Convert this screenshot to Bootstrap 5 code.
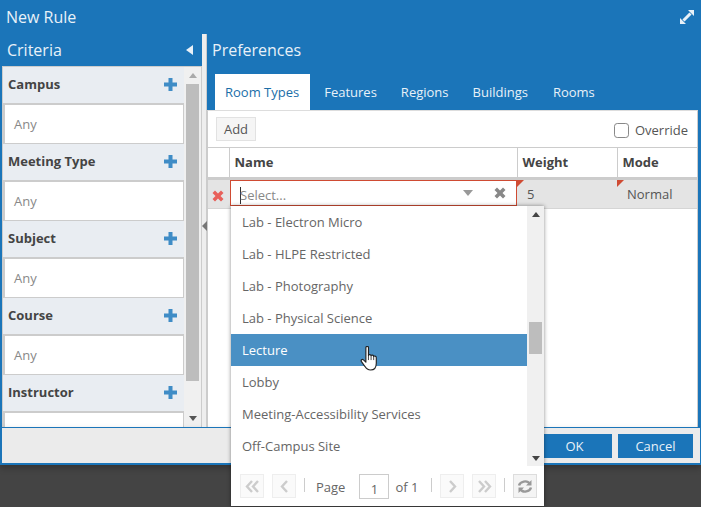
<!DOCTYPE html>
<html lang="en">
<head>
  <meta charset="UTF-8">
  <meta name="viewport" content="width=device-width, initial-scale=1.0">
  <title>New Rule</title>
  <link rel="stylesheet" href="https://cdn.jsdelivr.net/npm/bootstrap@5.3.0/dist/css/bootstrap.min.css">
  <style>
    html, body { margin: 0; height: 100%; overflow: hidden; background: #444; }
    body { font-family: "Open Sans", "Liberation Sans", sans-serif; font-size: 13px; color: #555; }
    .stage { position: relative; width: 701px; height: 507px; background: #444; overflow: hidden; }
    .dlg { width: 701px; height: 465px; background: #1b75b9; }
    .dlg-title { height: 34px; padding: 0 6px; color: #e8f1f8; font-size: 16px; line-height: 35px; }
    .dlg-body { height: 393px; padding-left: 2px; padding-right: 3px; }
    .left-pane { width: 200px; flex: none; }
    .pane-title { height: 32px; padding: 0 9px 0 5px; color: #e8f1f8; font-size: 16px; line-height: 33px; }
    .crit-box { height: 361px; background: #f0f0f0; border: 1px solid #ccc; border-bottom: 0; overflow: hidden; }
    .crit-list { width: 181px; flex: none; }
    .crit-head { height: 36px; padding: 0 7px 0 5px; background: #e9edf2; color: #444; font-weight: 700; font-size: 13px; }
    .crit-head svg { margin-top: -2px; }
    .crit-any { height: 41px; background: #fff; border: 1px solid #ccc; border-width: 2px 1px 1px 1px; border-left-width: 2px; padding-left: 9px; line-height: 39px; color: #888; }
    .fake-scroll { width: 17px; flex: none; }
    .fake-scroll .arrow { height: 17px; }
    .fake-scroll .thumb { width: 13px; margin: 0 auto; background: #bdbdbd; }
    .split { width: 5px; flex: none; margin-top: 0; background: #eee; border-right: 1px solid #ccc; position: relative; }
    .split svg { position: absolute; left: 0; top: 187px; }
    .right-pane { flex: 1; min-width: 0; }
    .pref-tabs { height: 36px; padding-left: 8px; margin-top: 8px; }
    .pref-tab { padding: 0 11px; margin-right: 2px; color: #e8f1f8; line-height: 37px; font-size: 13px; text-decoration: none; }
    .pref-tab.on { background: #fff; color: #1b6ea8; margin-right: 3px; padding: 0 11px 0 10px; }
    .pref-tab.wide { margin-right: 3px; }
    .pref-box { height: 317px; background: #fff; border: 1px solid #ccc; border-bottom: 0; border-top-color: #ddd; }
    .pref-bar { height: 37px; padding: 6px 9px 0 8px; border-bottom: 1px solid #ccc; }
    .add-btn { height: 24px; width: 40px; padding: 0; font-size: 13px; line-height: 22px; border-radius: 0; color: #555; background: #f5f5f5; border: 1px solid #e2e2e2; }
    .over-check { width: 15px; height: 15px; margin: 0 6px 0 0; border: 1px solid #888; border-radius: 3px; }
    .rule-tbl { table-layout: fixed; width: 489px; margin: 0; border-collapse: collapse; font-size: 13px; }
    .rule-tbl th { height: 30px; padding: 0 5px; font-weight: 700; color: #444; border-right: 1px solid #ccc; border-bottom: 3px solid #ccc; background: #fff; vertical-align: middle; }
    .rule-tbl td { height: 29px; padding: 2px 10px 0; background: #e4e4e4; color: #555; border-bottom: 1px solid #d5d5d5; position: relative; vertical-align: middle; }
    .rule-tbl td.cell-x { padding: 3px 0 0 4px; }
    .rule-tbl td.cell-in { padding: 0 0 2px 1px; }
    .red-tip { position: absolute; left: 0; top: 0; width: 0; height: 0; border-top: 7px solid #cf4b33; border-right: 7px solid transparent; }
    .sel-input { height: 26px; background: #fff; border: 1px solid #cf4b33; padding: 0 10px 0 9px; color: #888; }
    .sel-input .caret-bar { width: 1px; height: 17px; background: #333; margin-top: 5px; margin-right: -1px; flex: none; }
    .sel-input .sel-txt { padding-top: 6px; }
    .sel-input .sel-clear { margin-left: 21px; }
    .dlg-foot { height: 38px; background: #ebebeb; border: 2px solid #1b75b9; border-top-width: 1px; border-right-width: 1px; padding: 6px 7px 0 0; box-shadow: 0 3px 6px rgba(0,0,0,.25); gap: 6px; }
    .foot-btn { width: 75px; height: 24px; padding: 0; border-radius: 0; background: #1b75b9; color: #e8f1f8; border: 0; font-size: 13px; line-height: 24px; }
    .drop { position: absolute; left: 231px; top: 206px; width: 313px; height: 300px; background: #fff; box-shadow: 0 0 4px rgba(0,0,0,.45); }
    .drop-list { height: 260px; overflow: hidden; }
    .drop-items { width: 296px; flex: none; }
    .drop-row { height: 32px; padding: 0 11px; line-height: 33px; color: #666; font-size: 13px; border: 0; border-radius: 0; background: #fff; }
    .drop-row.hot { background: #4a90c4; color: #fff; }
    .drop-scroll { width: 17px; background: #f0f0f0; }
    .drop-pager { height: 40px; padding: 8px 0 0 9px; color: #666; font-size: 13px; white-space: nowrap; }
    .pg-btn { width: 24px; height: 24px; flex: none; background: #fafafa; border: 1px solid #eee; margin-right: 8px; }
    .pg-sep { width: 1px; height: 14px; flex: none; background: #ccc; margin: 4px 12px 0 0; }
    .pg-sep.tight { margin-right: 8px; }
    .pg-txt { margin-top: 4px; }
    .pg-num { width: 30px; height: 25px; flex: none; border: 1px solid #ccc; text-align: center; line-height: 28px; margin: 0 6px 0 14px; color: #666; }
    .pg-end { margin-right: 13px; }
    .hand { position: absolute; left: 360px; top: 346px; }
  </style>
</head>
<body>
  <div class="stage">
    <div class="dlg d-flex flex-column">
      <div class="dlg-title d-flex justify-content-between align-items-center">
        <span>New Rule</span>
        <svg width="16" height="16" viewBox="0 0 16 16" fill="#e8f1f8"><path d="M9 1H15V7ZM1 9V15H7Z"/><path d="M4.500 11.500 11.500 4.500" stroke="#e8f1f8" stroke-width="3"/></svg>
      </div>
      <div class="dlg-body d-flex">
        <div class="left-pane d-flex flex-column">
          <div class="pane-title d-flex justify-content-between align-items-center">
            <span>Criteria</span>
            <svg width="7" height="10" viewBox="0 0 7 10" fill="#e8f1f8"><path d="M7 0V10L0 5Z"/></svg>
          </div>
          <div class="crit-box d-flex">
            <div class="crit-list">
              <div class="crit-head d-flex justify-content-between align-items-center"><span>Campus</span><svg width="13" height="13" viewBox="0 0 13 13" fill="#3f8cc6"><path d="M4.500 0H8.500V4.500H13V8.500H8.500V13H4.500V8.500H0V4.500H4.500Z"/></svg></div>
              <div class="crit-any">Any</div>
              <div class="crit-head d-flex justify-content-between align-items-center"><span>Meeting Type</span><svg width="13" height="13" viewBox="0 0 13 13" fill="#3f8cc6"><path d="M4.500 0H8.500V4.500H13V8.500H8.500V13H4.500V8.500H0V4.500H4.500Z"/></svg></div>
              <div class="crit-any">Any</div>
              <div class="crit-head d-flex justify-content-between align-items-center"><span>Subject</span><svg width="13" height="13" viewBox="0 0 13 13" fill="#3f8cc6"><path d="M4.500 0H8.500V4.500H13V8.500H8.500V13H4.500V8.500H0V4.500H4.500Z"/></svg></div>
              <div class="crit-any">Any</div>
              <div class="crit-head d-flex justify-content-between align-items-center"><span>Course</span><svg width="13" height="13" viewBox="0 0 13 13" fill="#3f8cc6"><path d="M4.500 0H8.500V4.500H13V8.500H8.500V13H4.500V8.500H0V4.500H4.500Z"/></svg></div>
              <div class="crit-any">Any</div>
              <div class="crit-head d-flex justify-content-between align-items-center"><span>Instructor</span><svg width="13" height="13" viewBox="0 0 13 13" fill="#3f8cc6"><path d="M4.500 0H8.500V4.500H13V8.500H8.500V13H4.500V8.500H0V4.500H4.500Z"/></svg></div>
              <div class="crit-any"></div>
            </div>
            <div class="fake-scroll d-flex flex-column">
              <div class="arrow d-flex align-items-center justify-content-center"><svg width="8" height="5" viewBox="0 0 8 5" fill="#aaa"><path d="M4 0 8 5H0Z"/></svg></div>
              <div class="thumb" style="height:297px"></div>
              <div class="arrow mt-auto d-flex align-items-center justify-content-center"><svg width="8" height="5" viewBox="0 0 8 5" fill="#555"><path d="M0 0H8L4 5Z"/></svg></div>
            </div>
          </div>
        </div>
        <div class="split">
          <svg width="5" height="10" viewBox="0 0 5 10" fill="#777"><path d="M5 0V10L0 5Z"/></svg>
        </div>
        <div class="right-pane d-flex flex-column">
          <div class="pane-title">Preferences</div>
          <nav class="pref-tabs d-flex">
            <a class="pref-tab on" href="#">Room Types</a>
            <a class="pref-tab" href="#">Features</a>
            <a class="pref-tab" href="#">Regions</a>
            <a class="pref-tab wide" href="#">Buildings</a>
            <a class="pref-tab" href="#">Rooms</a>
          </nav>
          <div class="pref-box">
            <div class="pref-bar d-flex justify-content-between align-items-start">
              <button class="btn add-btn" type="button">Add</button>
              <label class="d-flex align-items-center mt-1"><input class="form-check-input over-check" type="checkbox">Override</label>
            </div>
            <table class="rule-tbl">
              <colgroup><col style="width:21px"><col style="width:288px"><col style="width:100px"><col style="width:80px"></colgroup>
              <thead><tr><th></th><th>Name</th><th>Weight</th><th>Mode</th></tr></thead>
              <tbody>
                <tr>
                  <td class="cell-x"><svg width="12" height="12" viewBox="0 0 12 12" fill="#e8605a"><path d="M3 .5 6 3.500 9 .5 11.500 3 8.500 6 11.500 9 9 11.500 6 8.500 3 11.500 .5 9 3.500 6 .5 3Z"/></svg></td>
                  <td class="cell-in">
                    <div class="sel-input d-flex align-items-center">
                      <span class="caret-bar"></span><span class="sel-txt">Select...</span>
                      <svg class="ms-auto" width="10" height="6" viewBox="0 0 10 6" fill="#999"><path d="M0 0H10L5 6Z"/></svg>
                      <svg class="sel-clear" width="12" height="12" viewBox="0 0 12 12" fill="#888"><path d="M3 .5 6 3.500 9 .5 11.500 3 8.500 6 11.500 9 9 11.500 6 8.500 3 11.500 .5 9 3.500 6 .5 3Z"/></svg>
                    </div>
                  </td>
                  <td><span class="red-tip"></span>5</td>
                  <td><span class="red-tip"></span>Normal</td>
                </tr>
              </tbody>
            </table>
          </div>
        </div>
      </div>
      <div class="dlg-foot d-flex justify-content-end">
        <button class="btn foot-btn" type="button">OK</button>
        <button class="btn foot-btn" type="button">Cancel</button>
      </div>
    </div>

    <!-- open combo list -->
    <div class="drop">
      <div class="drop-list d-flex">
        <div class="drop-items list-group">
          <div class="drop-row list-group-item">Lab - Electron Micro</div>
          <div class="drop-row list-group-item">Lab - HLPE Restricted</div>
          <div class="drop-row list-group-item">Lab - Photography</div>
          <div class="drop-row list-group-item">Lab - Physical Science</div>
          <div class="drop-row list-group-item hot">Lecture</div>
          <div class="drop-row list-group-item">Lobby</div>
          <div class="drop-row list-group-item">Meeting-Accessibility Services</div>
          <div class="drop-row list-group-item">Off-Campus Site</div>
        </div>
        <div class="drop-scroll d-flex flex-column align-items-center">
          <div class="d-flex align-items-center" style="height:17px"><svg width="8" height="5" viewBox="0 0 8 5" fill="#444"><path d="M4 0 8 5H0Z"/></svg></div>
          <div style="width:13px;height:32px;background:#bdbdbd;margin-top:99px"></div>
          <div class="mt-auto d-flex align-items-center" style="height:16px"><svg width="8" height="5" viewBox="0 0 8 5" fill="#444"><path d="M0 0H8L4 5Z"/></svg></div>
        </div>
      </div>
      <div class="drop-pager d-flex align-items-start">
        <span class="pg-btn d-flex align-items-center justify-content-center"><svg width="15" height="13" viewBox="0 0 15 13" fill="none" stroke="#ccc" stroke-width="2.400"><path d="M7 1 2 6.500 7 12M13 1 8 6.500 13 12"/></svg></span>
        <span class="pg-btn d-flex align-items-center justify-content-center"><svg width="9" height="13" viewBox="0 0 9 13" fill="none" stroke="#ccc" stroke-width="2.400"><path d="M7 1 2 6.500 7 12"/></svg></span>
        <span class="pg-sep" style="margin-right:11px"></span>
        <span class="pg-txt">Page</span>
        <span class="pg-num">1</span>
        <span class="pg-txt pg-end">of 1</span>
        <span class="pg-sep tight"></span>
        <span class="pg-btn d-flex align-items-center justify-content-center"><svg width="9" height="13" viewBox="0 0 9 13" fill="none" stroke="#ccc" stroke-width="2.400"><path d="M2 1 7 6.500 2 12"/></svg></span>
        <span class="pg-btn d-flex align-items-center justify-content-center"><svg width="15" height="13" viewBox="0 0 15 13" fill="none" stroke="#ccc" stroke-width="2.400"><path d="M2 1 7 6.500 2 12M8 1 13 6.500 8 12"/></svg></span>
        <span class="pg-sep tight"></span>
        <span class="pg-btn d-flex align-items-center justify-content-center" style="margin:0;background:#f4f4f4;border-color:#ddd"><svg width="16" height="15" viewBox="0 0 16 15" fill="none" stroke="#999" stroke-width="2.400"><path d="M2 6.500C3 2.500 10 .5 13 5M14 8.500C13 12.500 6 14.500 3 10"/><path d="M14.500 1V6.500H9M1.500 14V8.500H7" fill="#999" stroke="none"/></svg></span>
      </div>
    </div>

    <svg class="hand" width="18" height="25" viewBox="0.500 0.500 16 24"><path d="M5.500 2C5.500.5 8 .5 8 2V9.500C8 8.500 10.300 8.500 10.500 9.800 10.700 9 13 9 13 10.500 13.300 9.800 15.500 10 15.500 11.700V17C15.500 20.500 14 23.500 10 23.500 7 23.500 6 22.500 4.500 20L1.300 15.500C.3 14 2 12.800 3.200 13.800L5.500 16Z" fill="#fff" stroke="#222" stroke-width="1.100" stroke-linejoin="round"/><path d="M8 9.500V14M10.500 10V14M13 10.500V14" stroke="#222" stroke-width=".8" fill="none"/></svg>
  </div>
  <script src="https://cdn.jsdelivr.net/npm/bootstrap@5.3.0/dist/js/bootstrap.bundle.min.js"></script>
</body>
</html>
